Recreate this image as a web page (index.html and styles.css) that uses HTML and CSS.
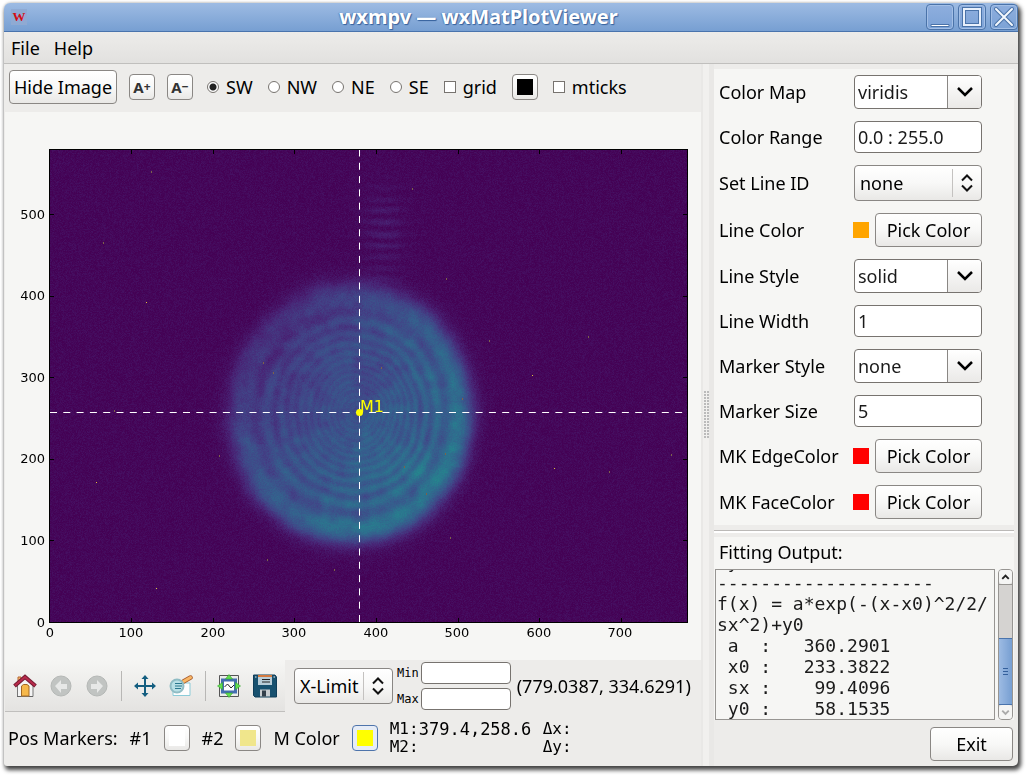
FILE: index.html
```html
<!DOCTYPE html>
<html lang="en">
<head>
<meta charset="utf-8">
<title>wxmpv — wxMatPlotViewer</title>
<link rel="stylesheet" href="styles.css">
</head>
<body>
<div class="window">
  <header class="titlebar">
    <span class="app-icon">W</span>
    <h1 class="title">wxmpv — wxMatPlotViewer</h1>
    <div class="window-buttons">
      <button class="window-button" aria-label="Minimize"><svg viewBox="0 0 26 26"><path d="M4 19.500h18v2h-18z" fill="#fff" stroke="#4a73a9"/></svg></button>
      <button class="window-button" aria-label="Maximize"><svg viewBox="0 0 26 26"><path d="M5 4h16v16H5z" fill="none" stroke="#4a73a9" stroke-width="4"/><path d="M5 4h16v16H5z" fill="none" stroke="#e8f0fb" stroke-width="2"/></svg></button>
      <button class="window-button" aria-label="Close"><svg viewBox="0 0 26 26"><path d="M5 4l16 16M21 4L5 20" stroke="#4a73a9" stroke-width="4" stroke-linecap="round"/><path d="M5 4l16 16M21 4L5 20" stroke="#f4f8fd" stroke-width="2" stroke-linecap="round"/></svg></button>
    </div>
  </header>
  <nav class="menubar">
    <button class="menu">File</button>
    <button class="menu">Help</button>
  </nav>
  <div class="content">
    <main class="left">
      <div class="toolbar">
        <button class="button hide-image">Hide Image</button>
        <button class="button square font-size">A<small>+</small></button>
        <button class="button square font-size">A<small>−</small></button>
        <div class="options">
          <label class="choice"><input type="radio" name="corner" checked>SW</label>
          <label class="choice"><input type="radio" name="corner">NW</label>
          <label class="choice"><input type="radio" name="corner">NE</label>
          <label class="choice"><input type="radio" name="corner">SE</label>
          <label class="choice"><input type="checkbox">grid</label>
          <button class="button square" aria-label="Grid color"><span class="swatch black"></span></button>
          <label class="choice"><input type="checkbox">mticks</label>
        </div>
      </div>
      <div class="figure">
        <canvas class="layer" id="heatmap" width="696" height="548"></canvas>
        <svg class="layer axes" viewBox="0 0 696 548">
          <path id="ticks" stroke="#000" fill="none"/>
          <path d="M354.500 510V38" stroke="#fff" stroke-dasharray="7 6.300"/>
          <path d="M45 300.500H682" stroke="#fff" stroke-dasharray="7 6.300"/>
          <rect x="44.500" y="37.500" width="638" height="473" fill="none" stroke="#000"/>
          <circle cx="354.500" cy="300.500" r="3.500" fill="#ff0"/>
          <text class="marker-label" x="355" y="300">M1</text>
          <g class="tick-label" text-anchor="middle">
            <text x="45" y="525">0</text><text x="126" y="525">100</text><text x="208" y="525">200</text><text x="289" y="525">300</text><text x="371" y="525">400</text><text x="452" y="525">500</text><text x="534" y="525">600</text><text x="615" y="525">700</text>
          </g>
          <g class="tick-label" text-anchor="end">
            <text x="40" y="515">0</text><text x="40" y="433">100</text><text x="40" y="351">200</text><text x="40" y="270">300</text><text x="40" y="188">400</text><text x="40" y="107">500</text>
          </g>
        </svg>
      </div>
      <div class="lower">
        <div class="navbar">
          <button class="tool" aria-label="Home"><svg viewBox="0 0 24 24"><path d="M5 3h3v5H5z" fill="#f7c473" stroke="#b86430"/><path d="M4.500 11L12 4l8 7v11.500h-15.500z" fill="#f4f4f4" stroke="#777"/><path d="M8.500 22v-10l2-1.500h3.500l2 1.500v10z" fill="#f6b84a" stroke="#a56a24"/><path d="M1.500 12L12 3l10.500 9" fill="none" stroke="#761c34" stroke-width="4"/><path d="M2 11.500L12 3l10 8.500" fill="none" stroke="#b92b4b" stroke-width="2"/><path d="M4 22.500h4M16 22.500h4" stroke="#666"/></svg></button>
          <button class="tool" aria-label="Back"><svg viewBox="0 0 24 24"><circle cx="12" cy="12" r="10" fill="#c1c4c2" stroke="#b5b8b6"/><path d="M6 12l6-6v4h6v5h-6v4z" fill="#e7e8e7"/></svg></button>
          <button class="tool" aria-label="Forward"><svg viewBox="0 0 24 24"><circle cx="12" cy="12" r="10" fill="#c1c4c2" stroke="#b5b8b6"/><path d="M18 12l-6-6v4H6v5h6v4z" fill="#e7e8e7"/></svg></button>
          <span class="separator"></span>
          <button class="tool" aria-label="Pan"><svg viewBox="0 0 24 24"><path d="M12 3v18M3 12h18" stroke="#145e80" stroke-width="2"/><path d="M12 1l3.500 4h-7zM12 23l3.500-4h-7zM1 12l4-3.500v7zM23 12l-4-3.500v7z" fill="#145e80"/></svg></button>
          <button class="tool" aria-label="Zoom"><svg viewBox="0 0 24 24"><path d="M4 9h17v12.500H4z" fill="#fdfdfd" stroke="#8bcbd8"/><path d="M14.500 7.500L21.500 3.500" stroke="#a85b2b" stroke-width="4.500" stroke-linecap="round"/><path d="M14.500 7.500L21.500 3.500" stroke="#f9b766" stroke-width="3" stroke-linecap="round"/><circle cx="8" cy="12" r="6.500" fill="#b9e0e6" stroke="#8fbcc4" stroke-width="2"/><path d="M6 9.500h7M6 12h7M6 14.500h6" stroke="#2a788e"/></svg></button>
          <span class="separator"></span>
          <button class="tool" aria-label="Subplots"><svg viewBox="0 0 24 24"><path d="M2.500 1.500h19v21h-19z" fill="#eceeea" stroke="#555"/><path d="M5.500 6h13v12h-13z" fill="#fff" stroke="#456eb0" stroke-width="3"/><path d="M7.500 13l3-3 3.500 4 3-3" fill="none" stroke="#222"/><path d="M12 0.500l3.500 4.500h-7zM12 23.500l3.500-4.500h-7zM0.500 12l5-3.500v7zM23.500 12l-5-3.500v7z" fill="#62df4f" stroke="#35a52f" stroke-width=".6"/></svg></button>
          <button class="tool" aria-label="Save"><svg viewBox="0 0 24 24"><path d="M1 1h21l1.500 2v20H2L0.500 21.500V1z" fill="#18516f" stroke="#103e59"/><path d="M5 2h14v9H5z" fill="#b9cdd8"/><path d="M5 1h14v2H5z" fill="#d47a3f"/><path d="M9 5.500h8M9 8h8" stroke="#222"/><path d="M7 15.500h10v7H7z" fill="#c9cdd0"/><path d="M9 16.500h4v6H9z" fill="#333f4a"/><path d="M2 3h1.500M20.500 3H22" stroke="#eee"/></svg></button>
        </div>
        <div class="combo limit"><select aria-label="Limit"><option>X-Limit</option></select><span class="combo-arrow spin"><svg viewBox="0 0 14 18"><path d="M2 6.500L7 1.500l5 5M2 11.500l5 5 5-5" fill="none" stroke="#111" stroke-width="2"/></svg></span></div>
        <div class="range">
          <label for="min">Min</label><input class="field" id="min" type="text">
          <label for="max">Max</label><input class="field" id="max" type="text">
        </div>
        <span class="coords">(779.0387, 334.6291)</span>
      </div>
      <div class="markers">
        <span>Pos Markers:</span>
        <span>#1</span><button class="button square" aria-label="Marker 1 color"><span class="swatch white"></span></button>
        <span>#2</span><button class="button square" aria-label="Marker 2 color"><span class="swatch khaki"></span></button>
        <span>M Color</span><button class="button square focused" aria-label="Marker color"><span class="swatch yellow"></span></button>
        <div class="readout">
          <span>M1:</span><span class="value">379.4,258.6</span><span>Δx:</span>
          <span>M2:</span><span></span><span>Δy:</span>
        </div>
      </div>
    </main>
    <div class="splitter"><span class="grip"></span></div>
    <aside class="right">
      <form class="settings">
        <label for="cmap">Color Map</label>
        <div class="combo"><select id="cmap"><option>viridis</option></select><span class="combo-arrow"><svg viewBox="0 0 18 12"><path d="M2 2l7 7 7-7" fill="none" stroke="#000" stroke-width="2.500"/></svg></span></div>
        <label for="crange">Color Range</label>
        <input class="field" id="crange" type="text" value="0.0 : 255.0">
        <label for="lineid">Set Line ID</label>
        <div class="combo choice-box"><select id="lineid"><option>none</option></select><span class="combo-arrow spin"><svg viewBox="0 0 14 18"><path d="M2 6.500L7 1.500l5 5M2 11.500l5 5 5-5" fill="none" stroke="#111" stroke-width="2"/></svg></span></div>
        <label for="lcolor">Line Color</label>
        <div class="picker"><span class="swatch orange"></span><button class="button" id="lcolor" type="button">Pick Color</button></div>
        <label for="lstyle">Line Style</label>
        <div class="combo"><select id="lstyle"><option>solid</option></select><span class="combo-arrow"><svg viewBox="0 0 18 12"><path d="M2 2l7 7 7-7" fill="none" stroke="#000" stroke-width="2.500"/></svg></span></div>
        <label for="lwidth">Line Width</label>
        <input class="field" id="lwidth" type="text" value="1">
        <label for="mstyle">Marker Style</label>
        <div class="combo"><select id="mstyle"><option>none</option></select><span class="combo-arrow"><svg viewBox="0 0 18 12"><path d="M2 2l7 7 7-7" fill="none" stroke="#000" stroke-width="2.500"/></svg></span></div>
        <label for="msize">Marker Size</label>
        <input class="field" id="msize" type="text" value="5">
        <label for="mkedge">MK EdgeColor</label>
        <div class="picker"><span class="swatch red"></span><button class="button" id="mkedge" type="button">Pick Color</button></div>
        <label for="mkface">MK FaceColor</label>
        <div class="picker"><span class="swatch red"></span><button class="button" id="mkface" type="button">Pick Color</button></div>
      </form>
      <div class="divider"></div>
      <section class="fitting">
        <h2>Fitting Output:</h2>
        <div class="output-row">
          <div class="output"><pre> y0 :
--------------------
f(x) = a*exp(-(x-x0)^2/2/
sx^2)+y0
 a  :   360.2901
 x0 :   233.3822
 sx :    99.4096
 y0 :    58.1535</pre></div>
          <div class="scrollbar">
            <button class="scroll-step" aria-label="Scroll up"><svg viewBox="0 0 14 14"><path d="M3.500 8.500L7 5l3.500 3.500" fill="none" stroke="#222" stroke-width="2"/></svg></button>
            <span class="track"></span>
            <span class="thumb"></span>
            <button class="scroll-step" aria-label="Scroll down"><svg viewBox="0 0 14 14"><path d="M3.500 5L7 8.500 10.500 5" fill="none" stroke="#aaa" stroke-width="2"/></svg></button>
          </div>
        </div>
      </section>
      <button class="button exit">Exit</button>
    </aside>
  </div>
</div>
<script src="plot.js"></script>
</body>
</html>
```

FILE: styles.css
```css
* { box-sizing: border-box; }

body {
  margin: 0;
  padding: 3px 12px 11px 4px;
  background: #fff;
  color: #000;
  font-family: "Noto Sans", sans-serif;
  font-size: 18px;
  line-height: 24px;
}

button, input, select {
  margin: 0;
  padding: 0;
  border: 0;
  background: none;
  color: inherit;
  font: inherit;
}

h1, h2, pre { margin: 0; font-size: 18px; font-weight: 400; }

svg { display: block; }

.window {
  background: #edecea;
  border-radius: 6px 6px 5px 3px;
  box-shadow: 2px 3px 4px 1px #444, 0 0 3px #ccc;
}

/* Title and menu bars */
.titlebar {
  display: flex;
  align-items: center;
  height: 29px;
  padding-left: 7px;
  border-bottom: 1px solid #4a74ad;
  border-radius: 6px 6px 0 0;
  background: linear-gradient(#9dbbe3, #779fd2);
}

.app-icon {
  width: 16px;
  height: 16px;
  background: #8faad3;
  color: #d40c14;
  font: bold 13px/16px "Liberation Serif", serif;
  text-align: center;
}

.title {
  flex: 1;
  padding-left: 4px;
  color: #fff;
  font-size: 20px;
  font-weight: 700;
  text-align: center;
  text-shadow: 1px 1px 1px #34609c, -1px 0 1px #5d86bb;
}

.window-buttons { display: flex; gap: 4px; }

.window-button {
  width: 28px;
  height: 26px;
  border: 1px solid #4a73a9;
  border-radius: 4px;
  background: linear-gradient(#8eaede, #7ca2d6);
  box-shadow: inset 0 0 0 1px #a3bfe6;
}

.menubar {
  display: flex;
  gap: 14px;
  height: 32px;
  padding: 0 7px;
  border-bottom: 1px solid #c0bfbd;
  background: linear-gradient(#edecea, #e2e1df);
}

/* Shared controls */
.button {
  height: 34px;
  border: 1px solid #8a8784;
  border-radius: 4px;
  background: linear-gradient(#fff, #f8f8f7 50%, #e9e8e6);
  white-space: nowrap;
}

.square {
  display: grid;
  place-items: center;
  width: 26px;
  height: 26px;
  flex: none;
}

.font-size {
  color: #333;
  font-weight: 700;
  font-size: 15px;
  display: flex;
  align-items: center;
  justify-content: center;
}

.font-size small { font-size: 12px; }

.focused { border-color: #4e74ab; background: #e6ecf6; }

.swatch { width: 16px; height: 16px; flex: none; }
.black { background: #000; }
.white { background: #fff; }
.khaki { background: #f0e68c; }
.yellow { background: #ff0; }
.orange { background: #ffa500; }
.red { background: #f00; }

.field {
  width: 100%;
  height: 32px;
  padding: 0 3px;
  border: 1px solid #77736f;
  border-radius: 4px;
  background: #fff;
  color: #1a1a1a;
}

.combo { display: grid; height: 34px; }

.combo select, .combo-arrow { grid-area: 1 / 1; }

.combo select {
  appearance: none;
  width: 100%;
  padding: 0 30px 0 3px;
  border: 1px solid #77736f;
  border-radius: 4px;
  background: #fff;
  color: #1a1a1a;
}

.combo-arrow {
  display: grid;
  place-items: center;
  justify-self: end;
  width: 34px;
  margin: 1px;
  border-left: 1px solid #8a8784;
  border-radius: 0 3px 3px 0;
  background: linear-gradient(#fff, #eae9e7);
  pointer-events: none;
}

.combo-arrow svg { width: 18px; }

.choice-box, .limit { height: 36px; }

.choice-box select, .limit select {
  padding-left: 5px;
  border-color: #8a8784;
  background: linear-gradient(#fff, #f8f8f7 50%, #e9e8e6);
  color: #000;
}

.spin {
  width: 28px;
  margin: 4px 2px;
  border-color: #c4c2c0;
  border-radius: 0;
  background: none;
}

.spin svg { width: 14px; }

/* Left column */
.content { display: flex; }
.left { flex: 1; min-width: 0; padding-left: 1px; }

.toolbar {
  display: flex;
  align-items: center;
  gap: 12px;
  height: 48px;
  padding: 0 4px 2px;
}

.hide-image { width: 108px; }

.options { display: flex; align-items: center; gap: 15px; padding-left: 2px; }

.choice { display: flex; align-items: center; gap: 7px; }

.choice input {
  appearance: none;
  width: 12px;
  height: 12px;
  border: 1px solid #77736f;
  background: #fff;
}

.choice input[type="radio"] { border-radius: 50%; }

.choice input[type="radio"]:checked {
  background: radial-gradient(circle, #222 3px, #fff 4px);
}

.figure { display: grid; background: #f6f6f4; }
.layer { grid-area: 1 / 1; width: 100%; height: auto; }
.tick-label { font: 13px "DejaVu Sans", sans-serif; }
.marker-label { fill: #ff0; font: 16px "DejaVu Sans", sans-serif; }

.lower { display: flex; align-items: center; }

.navbar {
  display: flex;
  align-items: center;
  gap: 12px;
  width: 280px;
  height: 52px;
  padding: 0 8px;
  border-bottom: 1px solid #c0bfbd;
  background: linear-gradient(#f6f6f4, #e4e3e1);
}

.tool { width: 24px; height: 24px; flex: none; }

.separator {
  width: 1px;
  height: 30px;
  margin: 0 -1px 0 0;
  background: #b8b7b5;
}

.limit { width: 99px; margin: 0 4px 0 9px; }

.range {
  display: grid;
  grid-template-columns: auto 90px;
  align-items: center;
  gap: 4px 2px;
  font: 12px "DejaVu Sans Mono", monospace;
}

.range .field { height: 22px; }

.coords { padding-left: 6px; white-space: nowrap; }

.markers {
  display: flex;
  align-items: center;
  gap: 12px;
  height: 52px;
  padding: 0 3px;
  white-space: nowrap;
}

.readout {
  display: grid;
  grid-template-columns: 29px 124px auto;
  font: 16px/18px "DejaVu Sans Mono", monospace;
}

.value { font-size: 17px; }

/* Splitter */
.splitter {
  display: grid;
  place-items: center;
  width: 13px;
  border: solid #e9e8e6;
  border-width: 0 5px 0 2px;
  background: #f1f0ee;
}

.grip {
  width: 5px;
  height: 48px;
  background: radial-gradient(circle at 1px 1px, #bbb 1px, transparent 1px) 0 0 / 3px 3px;
}

/* Right column */
.right {
  display: flex;
  flex-direction: column;
  width: 304px;
  padding: 5px 4px 5px 0;
}

.settings {
  display: grid;
  grid-template-columns: 130px 128px;
  align-items: center;
  gap: 12px 5px;
  padding: 6px 5px;
  background: #f6f6f4;
}

.picker { display: flex; align-items: center; justify-content: space-between; }
.picker .swatch { margin-left: -1px; }
.picker .button { width: 107px; }

.divider {
  height: 12px;
  padding-top: 5px;
}

.divider::before {
  content: "";
  display: block;
  height: 2px;
  border-top: 1px solid #bbb9b7;
  background: #fff;
}

.fitting { background: #f6f6f4; }
.fitting h2 { padding: 3px 5px 5px; }

.output-row { display: flex; gap: 3px; height: 151px; padding: 0 1px; }

.output {
  display: flex;
  flex: 1;
  flex-direction: column;
  justify-content: flex-end;
  overflow: hidden;
  border: 1px solid #979592;
}

.output pre {
  padding-left: 1px;
  color: #1a1a1a;
  font: 18px/21px "DejaVu Sans Mono", monospace;
}

.scrollbar {
  display: flex;
  flex-direction: column;
  width: 15px;
  border: 1px solid #979592;
  border-radius: 4px;
  background: #d5d3d1;
}

.scroll-step { height: 14px; border-radius: 3px; background: #f5f5f4; }
.track { flex: 1; border-top: 1px solid #979592; }

.thumb {
  display: grid;
  place-items: center;
  height: 67px;
  border: 1px solid #4a74ad;
  border-width: 1px 0;
  background: linear-gradient(90deg, #9dbbe3, #779fd2);
}

.thumb::before {
  content: "";
  width: 5px;
  height: 7px;
  background: repeating-linear-gradient(#34609c 0 1px, transparent 1px 3px);
}

.exit { width: 83px; margin: 7px 1px 0 0; align-self: flex-end; }
```

FILE: plot.js
```javascript
const X0 = 45, X1 = 682, Y0 = 38, Y1 = 510;

// Lower part of the viridis colour map, in steps of 0.1.
const VIRIDIS = [[68, 1, 84], [72, 36, 117], [65, 68, 135], [53, 95, 141], [42, 120, 142], [33, 145, 140], [34, 168, 132]];

let seed = 12345;
function random() {
  seed = (seed * 1664525 + 1013904223) >>> 0;
  return seed / 4294967296;
}

function color(v) {
  const t = Math.min(Math.max(v * 10, 0), 5.99);
  const i = Math.floor(t), f = t - i;
  return VIRIDIS[i].map((c, k) => c + (VIRIDIS[i + 1][k] - c) * f);
}

// Smooth lattice noise for the speckle in the beam.
const lattice = Array.from({ length: 4096 }, random);
function speckle(x, y) {
  const i = Math.floor(x), j = Math.floor(y);
  const s = t => t * t * (3 - 2 * t);
  const u = s(x - i), w = s(y - j);
  const at = (a, b) => lattice[(b & 63) * 64 + (a & 63)];
  return (at(i, j) * (1 - u) + at(i + 1, j) * u) * (1 - w)
    + (at(i, j + 1) * (1 - u) + at(i + 1, j + 1) * u) * w - 0.5;
}

function beam(x, y) {
  // The rings drift left as they grow.
  let rho = Math.hypot((x - 344) / 112, (y - 300) / 120);
  const drift = Math.max(0, 1 - rho);
  const dx = (x - 344 - 10 * drift) / 112, dy = (y - 300) / 120;
  rho = Math.hypot(dx, dy) + 0.03 * speckle(x / 24, y / 24);
  if (rho > 1.6) return 0;
  const angle = Math.atan2(dy, dx);
  const level = 0.27 + 0.13 * Math.min(rho, 1.1) * Math.cos(angle - 0.75);
  const d = 1.07 - rho;
  const phase = d > 0.1 ? (d * d - 0.01) / 0.082 : 0;
  const rings = 0.88 + (0.04 + 0.15 * rho * rho) * Math.cos(2 * Math.PI * phase);
  const edge = 1 / (1 + Math.exp((rho - 1.07) / 0.045));
  return edge * (level * rings + 0.11 * speckle(x / 8, y / 8) * (0.3 + level)
    + 0.10 * speckle(x / 30 + 9, y / 30) * (0.3 + level));
}

function fringes(x, y) {
  const patch = Math.exp(-(((x - 378) / 20) ** 2) - ((y - 118) / 42) ** 2);
  const wobble = 2 * speckle(x / 18, y / 14);
  return patch * (0.035 + 0.03 * Math.cos((y - 133) * 2 * Math.PI / 11.5 + wobble));
}

const canvas = document.getElementById("heatmap");
const context = canvas.getContext("2d");
const image = context.createImageData(X1 - X0, Y1 - Y0);
let p = 0;
for (let y = Y0; y < Y1; y++) {
  for (let x = X0; x < X1; x++) {
    const noise = (random() + random() - 0.9) * 0.034;
    const c = color(0.012 + beam(x, y) + fringes(x, y) + noise);
    image.data[p++] = c[0];
    image.data[p++] = c[1];
    image.data[p++] = c[2];
    image.data[p++] = 255;
  }
}
context.putImageData(image, X0, Y0);

// Hot pixels
const hot = [[146, 59], [407, 76], [98, 130], [441, 166], [141, 190], [583, 224], [484, 228], [258, 250], [268, 260], [527, 263], [376, 255], [109, 298], [549, 356], [666, 342], [214, 343], [457, 286], [604, 359], [91, 370], [440, 341], [399, 354], [421, 381], [262, 447], [329, 457], [445, 425], [151, 476]];
const bright = new Set([4, 9, 12, 17, 24]);
hot.forEach(([x, y], i) => {
  context.fillStyle = bright.has(i) ? "#e3c53a" : "#7d6249";
  context.fillRect(x, y, 1, bright.has(i) ? 1 : 2);
});

let path = "";
for (let i = 1; i < 8; i++) {
  const x = Math.round(44.5 + i * 81.6) + 0.5;
  path += `M${x} 510v-4M${x} 38v4`;
}
for (let i = 1; i < 6; i++) {
  const y = Math.round(510 - i * 81.6) + 0.5;
  path += `M45 ${y}h4M682 ${y}h-4`;
}
document.getElementById("ticks").setAttribute("d", path);
```
